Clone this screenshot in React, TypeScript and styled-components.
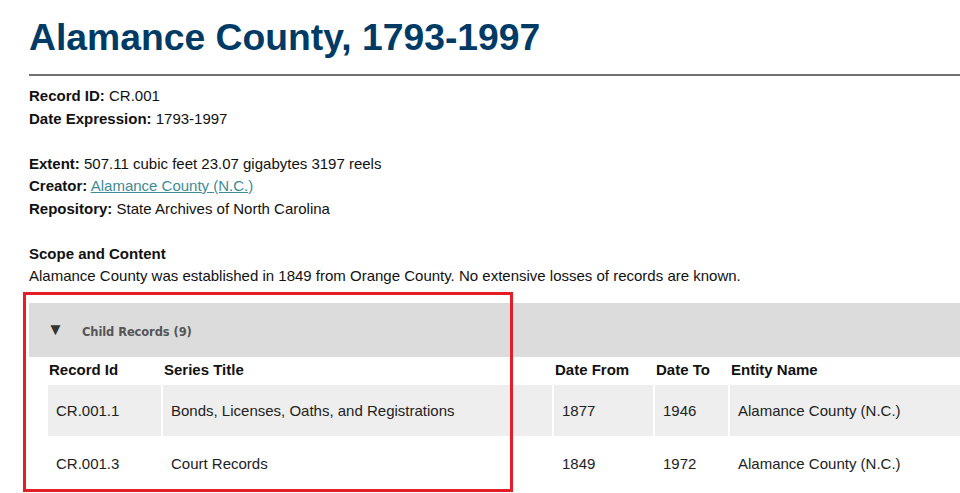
import styled, { createGlobalStyle } from 'styled-components';

const GlobalStyle = createGlobalStyle`
  html, body {
    margin: 0;
    padding: 0;
    background: #ffffff;
  }
  body {
    font-family: 'Liberation Sans', Arial, sans-serif;
    color: #111111;
    overflow: hidden;
  }
`;

interface ChildRecord {
  id: string;
  title: string;
  from: string;
  to: string;
  entity: string;
}

const records: ChildRecord[] = [
  {
    id: 'CR.001.1',
    title: 'Bonds, Licenses, Oaths, and Registrations',
    from: '1877',
    to: '1946',
    entity: 'Alamance County (N.C.)',
  },
  {
    id: 'CR.001.3',
    title: 'Court Records',
    from: '1849',
    to: '1972',
    entity: 'Alamance County (N.C.)',
  },
];

const columns = [
  { label: 'Record Id', width: 113 },
  { label: 'Series Title', width: 389 },
  { label: 'Date From', width: 99 },
  { label: 'Date To', width: 73 },
  { label: 'Entity Name', width: 300 },
];

const tableWidth = columns.reduce((sum, col) => sum + col.width, 0) + (columns.length + 1) * 2;

const App = () => {
  return (
    <Page>
      <GlobalStyle />
      <Title>Alamance County, 1793-1997</Title>
      <Rule />
      <Details>
        <Group>
          <Field>
            <Label>Record ID:</Label> CR.001
          </Field>
          <Field>
            <Label>Date Expression:</Label> 1793-1997
          </Field>
        </Group>
        <Group>
          <Field>
            <Label>Extent:</Label> 507.11 cubic feet 23.07 gigabytes 3197 reels
          </Field>
          <Field>
            <Label>Creator:</Label> <Link href="#">Alamance County (N.C.)</Link>
          </Field>
          <Field>
            <Label>Repository:</Label> State Archives of North Carolina
          </Field>
        </Group>
        <Group>
          <Heading>Scope and Content</Heading>
          <Field>
            Alamance County was established in 1849 from Orange County. No extensive losses of records
            are known.
          </Field>
        </Group>
      </Details>
      <Panel>
        <PanelBar>
          <Caret>▼</Caret>
          <PanelTitle>Child Records (9)</PanelTitle>
        </PanelBar>
        <Table style={{ width: tableWidth }}>
          <thead>
            <tr>
              {columns.map((col) => (
                <Th key={col.label} style={{ width: col.width }}>
                  {col.label}
                </Th>
              ))}
            </tr>
          </thead>
          <tbody>
            {records.map((record, index) => (
              <Row key={record.id} striped={index % 2 === 0}>
                <Td>{record.id}</Td>
                <Td>{record.title}</Td>
                <Td>{record.from}</Td>
                <Td>{record.to}</Td>
                <Td>{record.entity}</Td>
              </Row>
            ))}
          </tbody>
        </Table>
        <Highlight />
      </Panel>
    </Page>
  );
};

export default App;

const Page = styled.div`
  position: relative;
  width: 960px;
  height: 493px;
  overflow: hidden;
  padding-left: 29px;
  box-sizing: border-box;
`;

const Title = styled.h1`
  margin: 0;
  padding-top: 15px;
  font-family: 'Liberation Sans', Arial, sans-serif;
  font-size: 37.3px;
  line-height: 44px;
  font-weight: 700;
  color: #003b66;
  white-space: nowrap;
`;

const Rule = styled.div`
  margin-top: 15px;
  height: 2px;
  background: #707070;
`;

const Details = styled.div`
  padding-top: 9px;
  font-size: 15px;
  line-height: 22.5px;
`;

const Group = styled.div`
  + div {
    margin-top: 22.5px;
  }
`;

const Field = styled.div`
  white-space: nowrap;
`;

const Label = styled.span`
  font-weight: 700;
`;

const Heading = styled.div`
  font-weight: 700;
`;

const Link = styled.a`
  color: #3f8b95;
  text-decoration: underline;
`;

const Panel = styled.div`
  position: relative;
  margin-top: 15px;
`;

const PanelBar = styled.div`
  height: 54px;
  background: #dcdcdc;
  display: flex;
  align-items: center;
  padding-left: 18px;
  padding-top: 2px;
  box-sizing: border-box;
`;

const Caret = styled.span`
  font-family: 'Liberation Sans', Arial, sans-serif;
  font-size: 17px;
  line-height: 1;
  color: #333333;
  width: 35px;
  margin-top: -2px;
`;

const PanelTitle = styled.span`
  font-family: 'DejaVu Sans', Verdana, sans-serif;
  font-size: 11.5px;
  font-weight: 700;
  letter-spacing: -0.1px;
  color: #555555;
  margin-top: 2px;
`;

const Table = styled.table`
  table-layout: fixed;
  border-collapse: separate;
  border-spacing: 2px;
  margin-left: 17px;
  margin-top: -2px;
  font-size: 15px;
`;

const Th = styled.th`
  box-sizing: border-box;
  text-align: left;
  font-weight: 700;
  padding: 0 1px;
  height: 26px;
  white-space: nowrap;
`;

const Row = styled.tr<{ striped?: boolean }>`
  background: ${({ striped }) => (striped ? '#eeeeee' : '#ffffff')};
`;

const Td = styled.td`
  height: 51px;
  padding: 0 8px;
  white-space: nowrap;
  color: #222222;
`;

const Highlight = styled.div`
  position: absolute;
  left: -6px;
  top: -11px;
  width: 484px;
  height: 194px;
  border: 3px solid #e41e26;
  pointer-events: none;
`;
